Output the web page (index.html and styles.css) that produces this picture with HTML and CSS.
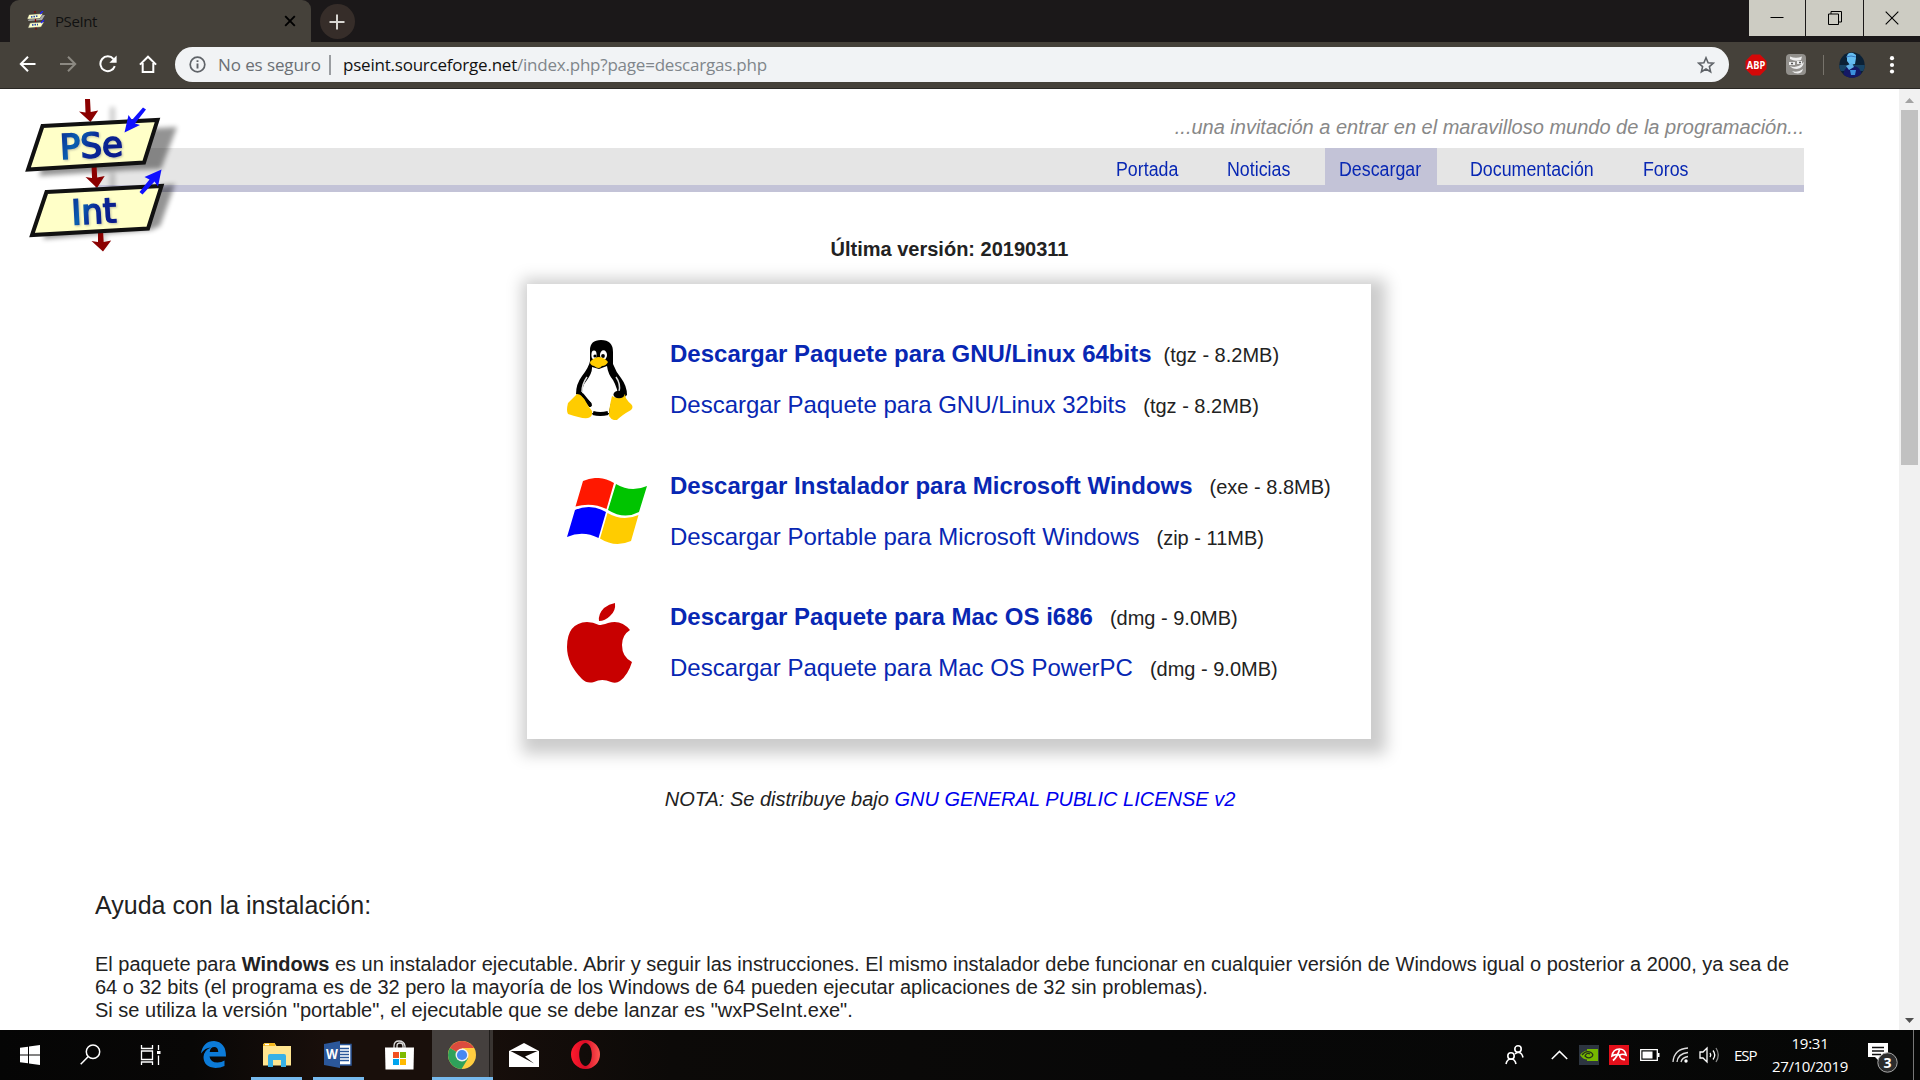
FILE: index.html
```html
<!DOCTYPE html>
<html lang="es">
<head>
<meta charset="utf-8">
<title>PSeInt</title>
<link rel="stylesheet" href="styles.css">
</head>
<body>
<div class="tabstrip">
  <div class="tab">
    <svg class="favicon" width="20" height="20" viewBox="0 0 20 20"><path d="M4 5l15-1-3 5-14 1z" fill="#aaa"/><path d="M3 3.500l14-1-3 5-13 .8z" fill="#ffffc8" stroke="#333" stroke-width=".5"/><path d="M4 12l14-1-3 5-13 1z" fill="#ffffc8" stroke="#555" stroke-width=".5"/><path d="M5 6l7-1M6 14l6-.5" stroke="#24a" stroke-width="1.600" stroke-dasharray="1.500 1"/><path d="M9 0v2M9.500 8v3M10 16.500v2" stroke="#800" stroke-width="1.200"/><path d="M17 0l-3 3M18 9l-3 3" stroke="#22f" stroke-width="1.200"/></svg>
    <span class="tab-title">PSeInt</span>
    <svg class="tab-close" width="12" height="12" viewBox="0 0 12 12"><path d="M1.200 1.200l9.600 9.600M10.800 1.200L1.200 10.800" stroke="#000" stroke-width="1.900"/></svg>
  </div>
  <div class="newtab"><svg width="16" height="16" viewBox="0 0 16 16"><path d="M8 .5v15M.5 8h15" stroke="#d8d6d2" stroke-width="2"/></svg></div>
  <div class="winbtns">
    <div class="winbtn"><svg width="14" height="14" viewBox="0 0 14 14"><path d="M.5 6.500h13" stroke="#000"/></svg></div>
    <div class="winbtn"><svg width="14" height="14" viewBox="0 0 14 14"><path d="M.5 3h10v10.500H.5zM3 3V.5h10.500V11H11" fill="none" stroke="#000"/></svg></div>
    <div class="winbtn"><svg width="14" height="14" viewBox="0 0 14 14"><path d="M.7.700l12.600 12.600M13.300.7L.7 13.300" stroke="#000" stroke-width="1.100"/></svg></div>
  </div>
</div>
<div class="toolbar">
  <div class="navicons">
    <svg width="18" height="18" viewBox="0 0 18 18" fill="none" stroke="#fff" stroke-width="2"><path d="M16.500 9H2M9 1.800L1.800 9 9 16.200"/></svg>
    <svg width="18" height="18" viewBox="0 0 18 18" fill="none" stroke="#8c8982" stroke-width="2"><path d="M1 9h15M9 1.800L16.200 9 9 16.200"/></svg>
    <svg width="18" height="18" viewBox="0 0 18 18"><path d="M15.800 11.200A7.400 7.400 0 1 1 14.500 4" fill="none" stroke="#fff" stroke-width="2"/><path d="M17.600.600v7.200h-7.200z" fill="#fff"/></svg>
    <svg width="18" height="18" viewBox="0 0 18 18" fill="none" stroke="#fff" stroke-width="2"><path d="M.9 9.600L9 1.700l8.100 7.900M3.700 8v8.900h10.600V8"/></svg>
  </div>
  <div class="omnibox">
    <svg width="17" height="17" viewBox="0 0 17 17"><circle cx="8.500" cy="8.500" r="7.300" fill="none" stroke="#5f6368" stroke-width="1.700"/><path d="M8.500 7.500v5M8.500 4.300V6" stroke="#5f6368" stroke-width="1.900"/></svg>
    <span class="secure">No es seguro</span>
    <span class="sep"></span>
    <span class="url"><b>pseint.sourceforge.net</b>/index.php?page=descargas.php</span>
    <svg class="star" width="18" height="18" viewBox="0 0 18 18"><path d="M9 1.800l2.100 4.900 5.300.4-4 3.500 1.200 5.200L9 13l-4.600 2.800 1.200-5.200-4-3.500 5.300-.4z" fill="none" stroke="#5f6368" stroke-width="1.600"/></svg>
  </div>
  <div class="extras">
    <svg width="22" height="22" viewBox="0 0 22 22"><path d="M7 .5h8L21.500 7v8L15 21.500H7L.5 15V7z" fill="#d40808"/><text transform="translate(11 15) scale(.84 1)" class="abp">ABP</text></svg>
    <svg class="ext2" width="20" height="21" viewBox="0 0 20 21"><rect width="20" height="21" rx="4" fill="#92908c"/><path d="M4 2.500Q10 5 16 2.500L15 6Q9 8 4 5zM3 8h6v3H3zm8-1h5v3h-5zM4 12q7 3 14-4-1 6-7 7-5 0-7-3zm2 5q6 2 11-2-1 4-5 4.500-4 0-6-2.500z" fill="#eee"/><path d="M5 9.500h2M13 8.500h2" stroke="#555" stroke-width="1.500"/></svg>
    <span class="tsep"></span>
    <svg class="avatar" width="26" height="26" viewBox="0 0 26 26"><defs><clipPath id="av"><circle cx="13" cy="13" r="12.700"/></clipPath></defs><g clip-path="url(#av)"><path d="M0 0h26v26H0z" fill="#0b2136"/><path d="M0 13h26v6H0z" fill="#174466"/><path d="M4 26q0-10 7-13l7 2q5 3 5 11z" fill="#141865"/><path d="M8 4q1-4 6-3l3 2v3l-1 6-5 1-3-4z" fill="#65bdf1"/><path d="M7 5q5-2 10 0" stroke="#3977c1" fill="none"/><path d="M7 14l6-3 2 4-5 3z" fill="#5eb0e8"/><path d="M11 18h6l-1 5h-4z" fill="#3b91dd"/></g></svg>
    <svg class="dots" width="6" height="18" viewBox="0 0 6 18" fill="#fff"><circle cx="3" cy="2.200" r="2.100"/><circle cx="3" cy="9" r="2.100"/><circle cx="3" cy="15.500" r="2.100"/></svg>
  </div>
</div>
<div class="viewport">
  <main class="page">
    <svg class="logo" width="190" height="165" viewBox="0 89 190 165">
      <defs>
        <filter id="soft" x="-20%" y="-20%" width="150%" height="150%"><feGaussianBlur stdDeviation="2.600"/></filter>
        <linearGradient id="ink" x1="0" y1="0" x2="1" y2=".4"><stop offset="0" stop-color="#0a2490"/><stop offset=".35" stop-color="#0a5fb0"/><stop offset=".6" stop-color="#0a2a98"/><stop offset="1" stop-color="#0a1c8c"/></linearGradient>
      </defs>
      <g filter="url(#soft)" fill="#000" opacity=".42">
        <path d="M52 134l125-7-16 42-32 1-90 6zM60 200l115-16-15 42-9 4-108 9z"/>
        <path d="M110 107h5v20h-5zM110 173h5v19h-5zM102 235h4v12h-4z" opacity=".5"/>
      </g>
      <g fill="#8b0000"><path d="M85 99h5l.7 13 7.500-1.500L90.500 122 79 111.500l6.500 1z"/><path d="M91.500 165h5l.7 12.500 7.500-1.500L97 188l-11.500-11 6.500 1z"/><path d="M98 230h5l.7 12 7.500-1.500L103 251.500 91.500 241l6.500 1z"/></g>
      <path d="M42.500 126l115-6-13.500 42.500-116 7zM46.500 192l115-6-13.500 42.500-116 6.500z" fill="#ffffc8" stroke="#111" stroke-width="4"/>
      <g class="logo-text"><text transform="translate(60.500 159) rotate(-3)">PSe</text><text transform="translate(72 224.500) rotate(-3)">Int</text></g>
      <g fill="#1010ff"><path d="M143 107.500l3 2-11 14 5 1.500-15.500 7.500 4-17.500 3.500 5z"/><path d="M139.500 192l3 2.500 12-13 3.500 5 3.500-17-17 7.500 5 2.500z"/></g>
    </svg>
    <header class="header">
      <div class="tagline">...una invitación a entrar en el maravilloso mundo de la programación...</div>
      <nav class="menu"><a><span>Portada</span></a><a><span>Noticias</span></a><a class="active"><span>Descargar</span></a><a class="docs"><span>Documentación</span></a><a><span>Foros</span></a></nav>
    </header>
    <p class="version">Última versión: 20190311</p>
    <section class="card">
      <div class="os">
        <svg width="80" height="80" viewBox="0 0 80 80"><path d="M23 10Q23 0 34 0q12 0 12 12v12q3 8 8 14 6 8 6 17l-6 5-12 14H24L16 58l-7-4q0-10 6-18 7-9 8-15z" fill="#000"/><path d="M25 27l7 2 8-3q1 8 6 14 5 9 5 17l-6 3q-2 5-3 13-5 1-10 1-6 0-9-2l-7-14q-3-10 4-18 5-7 5-12z" fill="#fff"/><ellipse cx="27" cy="15" rx="2.600" ry="4.400" fill="#fff"/><ellipse cx="36.500" cy="15" rx="3.500" ry="4.700" fill="#fff"/><circle cx="28" cy="16" r="1.600"/><circle cx="36" cy="16" r="1.900"/><path d="M31 17q6 0 10 5-2 4-6 4-3 4-8 0-4-1-4-4 3-4 8-5z" fill="#fc0"/><path d="M15 52q0-8 5-15M49 37q5 7 3 15" stroke="#ddd" stroke-width="1.500" fill="none"/><path d="M15 55l8 10" stroke="#000" stroke-width="4" stroke-linecap="round"/><path d="M10 54q5 0 9 8 2 4 6 9 1 6-4 7-6 1-20-4-2-3 0-11z" fill="#fc0"/><path d="M15 55l9 9" stroke="#000" stroke-width="2"/><path d="M45 56q6 4 13-2 0 5 6 10 3 3 0 6-9 5-14 10-5 1-8-4 0-8 3-20z" fill="#fc0"/><ellipse cx="52" cy="54.500" rx="5.500" ry="3.800"/><path d="M26 73q7 2 15 0" stroke="#000" stroke-width="4" fill="none"/></svg>
        <div class="links"><p><a class="main">Descargar Paquete para GNU/Linux 64bits</a><span class="near">(tgz - 8.2MB)</span></p><p><a>Descargar Paquete para GNU/Linux 32bits</a><span>(tgz - 8.2MB)</span></p></div>
      </div>
      <div class="os">
        <svg class="win" width="80" height="66" viewBox="0 0 80 66"><path d="M16 3Q32-4 47 5l-7.500 26Q25 24 8.500 28.500z" fill="#ff1800"/><path d="M49 6Q64 15 80 8l-8 26Q57 42 41 32z" fill="#00c400"/><path d="M8 32Q24 25 39 34l-7.500 26Q16 52 0 59z" fill="#00f"/><path d="M40.500 35Q56 44 71.500 37L64 63Q48 70 33 60.500z" fill="#fc0"/></svg>
        <div class="links"><p><a class="main">Descargar Instalador para Microsoft Windows</a><span>(exe - 8.8MB)</span></p><p><a>Descargar Portable para Microsoft Windows</a><span>(zip - 11MB)</span></p></div>
      </div>
      <div class="os">
        <svg class="apple" width="80" height="80" viewBox="0 0 80 80" fill="#c80000"><path d="M48 0q1 8-5 13-5 5-11 5-1-7 5-13 5-4 11-5z"/><path d="M20 19q6 0 12 3 3 0 9-2 13-4 22 7-8 5-8 15 0 12 10 17-4 13-12 19-4 3-9 1-9-4-17 0-7 2-12-3Q0 61 0 44 0 20 20 19z"/></svg>
        <div class="links"><p><a class="main">Descargar Paquete para Mac OS i686</a><span>(dmg - 9.0MB)</span></p><p><a>Descargar Paquete para Mac OS PowerPC</a><span>(dmg - 9.0MB)</span></p></div>
      </div>
    </section>
    <p class="nota">NOTA: Se distribuye bajo <a>GNU GENERAL PUBLIC LICENSE v2</a></p>
    <h2 class="help-title">Ayuda con la instalación:</h2>
    <p class="help">El paquete para <b>Windows</b> es un instalador ejecutable. Abrir y seguir las instrucciones. El mismo instalador debe funcionar en cualquier versión de Windows igual o posterior a 2000, ya sea de<br>64 o 32 bits (el programa es de 32 pero la mayoría de los Windows de 64 pueden ejecutar aplicaciones de 32 sin problemas).<br>Si se utiliza la versión "portable", el ejecutable que se debe lanzar es "wxPSeInt.exe".</p>
  </main>
  <div class="scrollbar">
    <svg width="21" height="21" viewBox="0 0 21 21"><path d="M6 14l4.500-5 4.500 5z" fill="#a3a3a3"/></svg>
    <div class="thumb"></div>
    <svg class="down" width="21" height="21" viewBox="0 0 21 21"><path d="M6 9h9l-4.500 5z" fill="#505050"/></svg>
  </div>
</div>
<footer class="taskbar">
  <div class="apps">
    <div class="app"><svg width="20" height="20" viewBox="0 0 20 20" fill="#fff"><path d="M0 2.800L8 1.700v7.800H0zM9 1.500L20 0v9.500H9zM0 10.400h8v7.900l-8-1.100zM9 10.400h11V20L9 18.500z"/></svg></div>
    <div class="app"><svg width="21" height="21" viewBox="0 0 21 21" fill="none" stroke="#fff" stroke-width="1.500"><circle cx="13" cy="7.700" r="6.700"/><path d="M8.300 12.500L.7 20.300"/></svg></div>
    <div class="app"><svg width="21" height="20" viewBox="0 0 21 20" fill="none" stroke="#fff" stroke-width="1.300"><path d="M1.500 0v3.500h11V0M1.500 6h11v8.500h-11zM1.500 20v-3h11v3M18.500 0v5M18.500 10.500V20"/><path d="M17 6h3.500v3H17z" fill="#fff" stroke="none"/></svg></div>
    <div class="app wide"><svg width="25" height="27" viewBox="0 0 25 27"><path d="M0 12.500Q2 0 13 0q12 1 12 15.500H8.500q1 6 8 6 4 0 7-2v5.500q-4 2-9 2-12-1-12-11Q3 9 10 6.500q-6 0-10 6zM8.700 11h8.600q-.3-5-4-5-4 0-4.600 5z" fill="#0c7bd8" fill-rule="evenodd"/></svg></div>
    <div class="app open"><svg width="28" height="24" viewBox="0 0 28 24"><path d="M0 1.500L1.500 0h10l2 3H28v19.500H0z" fill="#ffe590"/><path d="M0 1.500L1.500 0h10l1 3H0z" fill="#f3b81e"/><path d="M2 1.500h4" stroke="#fff" stroke-width="1.400"/><path d="M5 24V13q0-2 2-2h14q2 0 2 2v11h-5v-7h-8v7z" fill="#38b1e6"/></svg></div>
    <div class="app open"><svg width="28" height="27" viewBox="0 0 28 27"><path d="M14 3.500h13V24H14z" fill="#fff" stroke="#2b579a" stroke-width="1.500"/><path d="M16 7.500h9M16 10.500h9M16 13.500h9M16 16.500h9M16 19.500h9" stroke="#2b579a" stroke-width="1.400"/><path d="M0 3l16-3v27L0 24z" fill="#2b579a"/><text class="word" transform="translate(8 18) scale(.82 1)">W</text></svg></div>
    <div class="app"><svg width="29" height="30" viewBox="0 0 29 30"><path d="M9 10V6q0-5 5-5t6 5v4M12 10V6q0-3 3-3t3 3v4" fill="none" stroke="#ddd" stroke-width="1.300"/><path d="M0 7.500h29L28.500 29.500H.5z" fill="#fff"/><path d="M8 12h6v6H8z" fill="#f25022"/><path d="M15 12h6v6h-6z" fill="#7fba00"/><path d="M8 19h6v6H8z" fill="#00a4ef"/><path d="M15 19h6v6h-6z" fill="#ffb900"/></svg></div>
    <div class="app current"><svg width="28" height="28" viewBox="0 0 28 28"><circle cx="14" cy="14" r="14" fill="#ffcd40"/><path d="M14 14L1.900 7A14 14 0 0 1 26.100 7H14z" fill="#dc4b3e"/><path d="M14 14L1.900 7A14 14 0 0 0 13.600 28L20 17.500z" fill="#2fa15a"/><path d="M14 7.500h12.500L20 17.500z" fill="#ffcd40"/><circle cx="14" cy="14" r="6.500" fill="#f1f1f1"/><circle cx="14" cy="14" r="5.100" fill="#4688f1"/></svg></div>
    <div class="app mail"><svg width="30" height="24" viewBox="0 0 30 24"><path d="M0 8L15 0l15 8v16H0z" fill="#fff"/><path d="M1.500 8h27L16 13.500l9 7L13 14z" fill="#120c09"/></svg></div>
    <div class="app opera"><svg width="29" height="29" viewBox="0 0 29 29"><defs><linearGradient id="op"><stop offset="0" stop-color="#ff1b2d"/><stop offset=".5" stop-color="#d80b25"/><stop offset="1" stop-color="#ff5550"/></linearGradient></defs><path d="M14.500 0a14.500 14.500 0 1 0 0 29 14.500 14.500 0 1 0 0-29zM14.500 3c3.500 0 6.300 5 6.300 11.500S18 26 14.500 26s-6.300-5-6.300-11.500S11 3 14.500 3z" fill="url(#op)" fill-rule="evenodd"/></svg></div>
  </div>
  <div class="tray">
    <svg class="people" width="20" height="20" viewBox="0 0 20 20" fill="none" stroke="#fff" stroke-width="1.600"><circle cx="13" cy="4" r="3.200"/><circle cx="6" cy="11" r="3.200"/><path d="M1 19q1-5 5-5t5 5M10 9q2-2 4-1.500 3 .5 4 5"/></svg>
    <svg class="chev" width="17" height="10" viewBox="0 0 17 10"><path d="M.8 9l7.700-7.600L16.200 9" fill="none" stroke="#fff" stroke-width="1.500"/></svg>
    <svg class="nv" width="20" height="20" viewBox="0 0 20 20"><path d="M0 0h20v20H0z" fill="#2d3540"/><path d="M8 4h11v12H8zM1 10q6-8 14-2l-4 6Q5 16 1 10z" fill="#76b900"/><path d="M3 10q4-5 9-2.500 3 2 1 4-4 3-7-.5 2-4 5-2" fill="none" stroke="#25301a" stroke-width="1.300"/></svg>
    <svg class="av" width="20" height="20" viewBox="0 0 20 20"><path d="M0 0h20v20H0z" fill="#e30f1a"/><path d="M3 11Q4 4 10.500 4q5.500 0 6.500 6-3.500-1.500-6.500 0Q7 9 3 11z" fill="none" stroke="#fff" stroke-width="1.700"/><path d="M10.500 4.500Q9 11 4 15.500M10.500 10q.5 5 5.500 4.500" fill="none" stroke="#fff" stroke-width="1.700"/></svg>
    <svg class="bat" width="20" height="12" viewBox="0 0 20 12"><path d="M.7.700h16.600v10.600H.7z" fill="none" stroke="#fff" stroke-width="1.300"/><path d="M2.500 2.500h10v7h-10zM18 4h1.500v4H18z" fill="#fff"/></svg>
    <svg class="wifi" width="17" height="16" viewBox="0 0 17 16" fill="none" stroke="#ddd" stroke-width="1.300"><path d="M1 15Q2 2 16 1M5 15q1-8.500 11-9.500M9 15q1-4.500 7-5.500" /><circle cx="14" cy="14" r="1.700" fill="#fff" stroke="none"/></svg>
    <svg class="vol" width="21" height="18" viewBox="0 0 21 18" fill="none" stroke="#fff" stroke-width="1.300"><path d="M1 6h3l4-4v14l-4-4H1zM11 7q1.500 2 0 4"/><path d="M14 4.500q3.500 4.500 0 9"/><path d="M17 2q4.500 7 0 14" stroke="#888"/></svg>
    <span class="lang">ESP</span>
    <div class="clock"><span>19:31</span><span class="date">27/10/2019</span></div>
    <svg class="notif" width="30" height="32" viewBox="0 0 30 32"><path d="M0 1h20v14h-9v4l-4-4H0z" fill="#fff"/><path d="M4 5.500h12M4 9h12M4 12.500h9" stroke="#111" stroke-width="1.300"/><circle cx="19.500" cy="20.500" r="9.700" fill="#2c2c2c" stroke="#aaa" stroke-width="1"/><text x="19.300" y="25.500" class="badge">3</text></svg>
    <span class="edge"></span>
  </div>
</footer>
</body>
</html>
```
FILE: styles.css
```css
* { box-sizing: border-box; }
body { margin: 0; width: 1920px; height: 1080px; overflow: hidden; display: flex; flex-direction: column; font-family: "Liberation Sans", Arial, sans-serif; font-size: 20px; color: #222; background: #fff; }
p, h2 { margin: 0; }
svg { display: block; flex: none; }

/* browser frame */
.tabstrip { height: 42px; background: #1b1819; display: flex; align-items: flex-start; padding-left: 10px; flex: none; }
.tab { width: 301px; height: 42px; background: #45413a; border-radius: 9px 9px 0 0; display: flex; align-items: center; padding: 0 15px 0 16px; }
.tab-title { font: 400 15px "Open Sans", sans-serif; letter-spacing: -.4px; color: #111; margin-left: 9px; }
.tab-close { margin-left: auto; }
.newtab { width: 35px; height: 35px; margin: 4px 0 0 9px; border-radius: 50%; background: #362d29; display: flex; align-items: center; justify-content: center; }
.newtab svg { margin-left: -1px; }
.winbtns { margin-left: auto; display: flex; gap: 1px; }
.winbtn { width: 57px; height: 36px; background: #cdccc3; display: flex; align-items: center; justify-content: center; }
.winbtn:first-child { width: 56px; }
.winbtn:last-child { width: 56px; }
.toolbar { height: 47px; background: #45413a; border-bottom: 1px solid #292724; display: flex; align-items: flex-start; padding: 5px 14px 0 19px; flex: none; }
.navicons { display: flex; gap: 22px; margin-top: 8px; width: 156px; }
.omnibox { width: 1554px; height: 35px; border-radius: 18px; background: #f1f3f5; display: flex; align-items: center; padding: 0 14px 0 14px; font: 17px "Open Sans", sans-serif; }
.secure { color: #6b6f74; margin-left: 12px; width: 103px; white-space: nowrap; font-size: 17px; letter-spacing: -.1px; }
.sep { width: 2px; height: 20px; background: #9a9da1; margin: 0 12px 0 8px; }
.url { color: #80868b; white-space: nowrap; letter-spacing: -.22px; }
.url b { font-weight: 400; color: #111; }
.star { margin-left: auto; }
.extras { display: flex; align-items: center; height: 35px; margin-left: 16px; }
.abp { font: 700 11px "Open Sans", sans-serif; fill: #fff; text-anchor: middle; }
.ext2 { margin-left: 19px; }
.tsep { width: 1px; height: 20px; background: #77736b; margin: 0 15px 0 17px; }
.dots { margin-left: 24px; }

/* web page */
.viewport { height: 941px; display: flex; flex: none; overflow: hidden; }
.page { width: 1899px; height: 941px; padding: 0 95px; position: relative; }
.logo { position: absolute; left: 0; top: 0; }
.logo-text { font: 34px "DejaVu Sans", sans-serif; fill: url(#ink); stroke: url(#ink); stroke-width: 1.600px; filter: drop-shadow(1px 1.500px 1px #8888); }
.tagline { height: 59px; padding-top: 26px; line-height: 24px; text-align: right; font-style: italic; color: #888; white-space: nowrap; }
.menu { height: 44px; background: #e5e5e5; border-bottom: 7px solid #c3c3d7; display: flex; padding-left: 1007px; color: #0827b3; line-height: 42px; white-space: nowrap; }
.menu a { height: 37px; width: 111px; padding-left: 14px; flex: none; }
/* condensed menu lettering */
.menu span { display: inline-block; transform: scaleX(.89); transform-origin: left; }
.menu a:nth-child(2) { width: 112px; }
.menu .active { background: #c3c3d7; width: 112px; margin-right: 19px; }
.menu .docs { width: 173px; }
.version { text-align: center; font-weight: 700; line-height: 24px; margin-top: 45px; }
.card { width: 844px; height: 455px; margin: 23px 0 0 432px; background: #fff; box-shadow: 5px 5px 15px 10px #ccc; padding: 56px 0 0 40px; display: flex; flex-direction: column; }
.os { display: flex; height: 131.500px; gap: 23px; }
.win { margin-top: 6px; }
.links p { height: 51px; line-height: 28px; white-space: nowrap; }
.links a { font-size: 24px; color: #0827b3; }
.links .main { font-weight: 700; }
.links span { margin-left: 17px; }
.links .near { margin-left: 12px; }
.nota { text-align: center; font-style: italic; line-height: 24px; margin-top: 48px; padding-left: 1px; }
.nota a { color: #0000ee; }
.help-title { font-size: 25px; font-weight: 400; line-height: 30px; margin-top: 79px; }
.help { line-height: 23px; margin-top: 33px; white-space: nowrap; }
.scrollbar { width: 21px; height: 941px; background: #f1f1f1; display: flex; flex-direction: column; align-items: center; }
.thumb { width: 17px; height: 355px; background: #c1c1c1; }
.down { margin-top: auto; }

/* taskbar */
.taskbar { height: 50px; background: linear-gradient(90deg, #050505 0, #080706 10%, #190f0b 17%, #190f0b 23%, #0c0a08 35%, #080808 60%, #060706 100%); display: flex; justify-content: space-between; flex: none; color: #fff; }
.apps { display: flex; }
.app { width: 60px; height: 50px; display: flex; align-items: center; justify-content: center; border-bottom: 3px solid transparent; padding-top: 2px; }
.app.wide { width: 68px; }
.app:nth-child(4) { margin-right: 3px; padding-right: 1px; }
.app.open { width: 51px; border-color: #76b9ed; }
.app.open + .open { margin-left: 11px; padding-right: 2px; }
.app:nth-child(7) { width: 68px; padding-left: 2px; }
.app.current { width: 61px; background: linear-gradient(90deg, #45403e 57px, #201d1b 57px 58px, #393431 58px); border-color: #76b9ed; background-clip: padding-box; padding-right: 2px; }
.app.mail { width: 62px; }
.app.opera { width: 61px; }
.word { font: 700 15px "Open Sans", sans-serif; fill: #fff; text-anchor: middle; }
.tray { display: flex; align-items: center; height: 50px; font: 15px "Open Sans", sans-serif; letter-spacing: -.2px; }
.chev { margin-left: 26px; }
.nv { margin-left: 11px; }
.av { margin-left: 10px; }
.bat { margin-left: 11px; }
.wifi { margin-left: 12px; }
.vol { margin-left: 10px; }
.lang { margin-left: 14px; width: 26px; letter-spacing: -1px; }
.clock { width: 90px; margin-left: 5px; display: flex; flex-direction: column; align-items: center; line-height: 23px; }
.clock .date { letter-spacing: -.35px; }
.notif { margin: 6px 0 0 13px; }
.badge { font: 700 14px "Open Sans", sans-serif; fill: #fff; text-anchor: middle; }
.edge { width: 1px; height: 50px; background: #777; margin: 0 6px 0 15px; }
```
